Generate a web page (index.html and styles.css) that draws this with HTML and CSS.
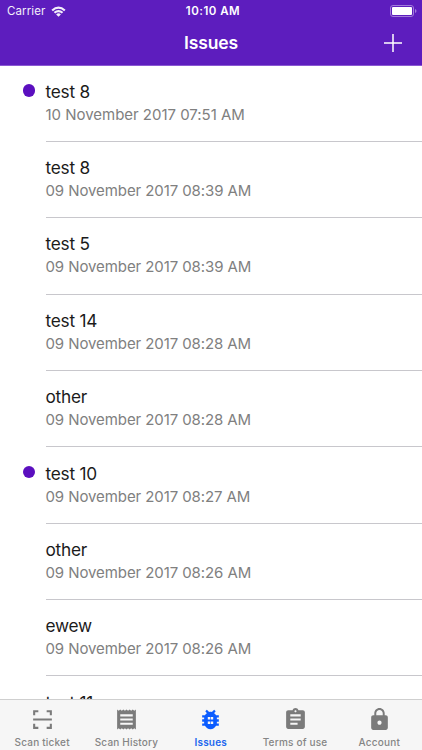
FILE: index.html
```
<!DOCTYPE html>
<html lang="en">
<head>
<meta charset="utf-8">
<title>Issues</title>
<link rel="stylesheet" href="styles.css">
</head>
<body>
<div class="app">
  <header class="header">
    <div class="status">
      <div class="carrier"><span>Carrier</span>
        <svg class="wifi" viewBox="0 0 15 11"><path d="M.4 3.700Q7.500-2.800 14.600 3.700L13.100 5.200Q7.500.3 1.900 5.200ZM2.700 6.100Q7.500 1.900 12.300 6.100L10.800 7.600Q7.500 4.800 4.200 7.600ZM5.100 8.400Q7.500 6.300 9.900 8.400L7.500 10.800Z"/></svg>
      </div>
      <div class="clock">10:10 AM</div>
      <svg class="battery" viewBox="0 0 27 12"><rect class="shell" x=".5" y=".5" width="23" height="11" rx="2.5"/><rect x="2" y="2" width="20" height="8" rx="1"/><path class="tip" d="M25 4Q26.5 4.5 26.5 6T25 8Z"/></svg>
    </div>
    <div class="navbar">
      <h1 class="title">Issues</h1>
      <svg class="plus" viewBox="0 0 18 18"><path d="M9 0V18M0 9H18"/></svg>
    </div>
  </header>
  <main class="list">
    <div class="row"><span class="dot"></span><div class="cell"><div class="name">test 8</div><div class="date narrow">10 November 2017 07:51 AM</div></div></div>
    <div class="row"><div class="cell"><div class="name">test 8</div><div class="date">09 November 2017 08:39 AM</div></div></div>
    <div class="row"><div class="cell"><div class="name">test 5</div><div class="date">09 November 2017 08:39 AM</div></div></div>
    <div class="row"><div class="cell"><div class="name">test 14</div><div class="date">09 November 2017 08:28 AM</div></div></div>
    <div class="row"><div class="cell"><div class="name">other</div><div class="date">09 November 2017 08:28 AM</div></div></div>
    <div class="row"><span class="dot"></span><div class="cell"><div class="name">test 10</div><div class="date">09 November 2017 08:27 AM</div></div></div>
    <div class="row"><div class="cell"><div class="name">other</div><div class="date">09 November 2017 08:26 AM</div></div></div>
    <div class="row"><div class="cell"><div class="name">ewew</div><div class="date">09 November 2017 08:26 AM</div></div></div>
    <div class="row"><div class="cell"><div class="name">test 11</div></div></div>
  </main>
  <nav class="tabs">
    <div class="tab"><svg viewBox="0 0 24 24"><path d="M3 3H8V5H5V8H3ZM16 3H21V8H19V5H16ZM3 16H5V19H8V21H3ZM19 16H21V21H16V19H19ZM3 11H21V13H3Z"/></svg><span>Scan ticket</span></div>
    <div class="tab"><svg viewBox="0 0 24 24"><path d="M18 17H6v-2h12v2zm0-4H6v-2h12v2zm0-4H6V7h12v2zM3 21.500l1.500-1 1.500 1 1.500-1 1.500 1 1.500-1 1.500 1 1.500-1 1.500 1 1.500-1 1.500 1 1.500-1 1.500 1V2.500l-1.500 1-1.500-1-1.500 1-1.500-1-1.500 1-1.500-1-1.500 1-1.500-1-1.500 1-1.500-1-1.500 1-1.500-1z"/></svg><span>Scan History</span></div>
    <div class="tab active"><svg viewBox="0 0 24 24"><path fill-rule="evenodd" d="M20 7.800h-2.700c-.45-.7-1.100-1.300-1.900-1.800L17 4.100 15.500 2.600l-2.200 2.100C12.900 4.600 12.500 4.600 12 4.600s-.9 0-1.300.1L8.500 2.600 7 4.100 8.600 6C7.800 6.500 7.200 7.100 6.700 7.800H4v2.300h1.900V11.800H4v2.300h1.900V15.800H4v2.300h2.700c1 1.900 3 3.300 5.300 3.300s4.300-1.400 5.300-3.300H20v-2.300h-1.900V14.100H20v-2.300h-1.900V10.100H20ZM9.400 9.500h2.300v2.500H9.400ZM12.300 9.500h2.300v2.500h-2.300ZM9.400 13.900h2.300v2.500H9.400ZM12.300 13.900h2.300v2.500h-2.300Z"/></svg><span>Issues</span></div>
    <div class="tab"><svg viewBox="0 0 24 24"><path d="M19 3h-4.180C14.400 1.840 13.300 1 12 1c-1.300 0-2.400.84-2.820 2H5c-1.100 0-2 .9-2 2v14c0 1.100.9 2 2 2h14c1.100 0 2-.9 2-2V5c0-1.100-.9-2-2-2zm-7 0c.55 0 1 .45 1 1s-.45 1-1 1-1-.45-1-1 .45-1 1-1zm2 14H7v-2h7v2zm3-4H7v-2h10v2zm0-4H7V7h10v2z"/></svg><span>Terms of use</span></div>
    <div class="tab"><svg viewBox="0 0 24 24"><path d="M18 8h-1V6c0-2.760-2.240-5-5-5S7 3.240 7 6v2H6c-1.100 0-2 .9-2 2v10c0 1.100.9 2 2 2h12c1.100 0 2-.9 2-2V10c0-1.100-.9-2-2-2zm-6 9c-1.100 0-2-.9-2-2s.9-2 2-2 2 .9 2 2-.9 2-2 2zm3.100-9H8.900V6c0-1.710 1.390-3.100 3.100-3.100 1.710 0 3.100 1.390 3.100 3.100v2z"/></svg><span>Account</span></div>
  </nav>
</div>
</body>
</html>
```
FILE: styles.css
```
* { box-sizing: border-box; }
body { margin: 0; font-family: Inter, "Liberation Sans", sans-serif; background: #fff; }
.app { width: 422px; height: 750px; display: flex; flex-direction: column; overflow: hidden; }
.header { flex: none; height: 65.5px; background: #5d1dbe; color: #fff; border-bottom: 1px solid #8a58d2; }
.status { height: 22px; display: grid; grid-template-columns: 1fr auto 1fr; align-items: center; padding: 0 5px 0 7px; }
.carrier { display: flex; align-items: center; gap: 5.5px; font-size: 11.5px; letter-spacing: .1px; opacity: .93; }
.wifi { width: 15px; height: 11px; fill: #fff; }
.clock { padding-left: 2px; font-size: 11.5px; font-weight: 600; letter-spacing: .5px; }
.battery { width: 27px; height: 12px; justify-self: end; fill: #fff; }
.shell { fill: none; stroke: #a27bdb; }
.tip { fill: #a27bdb; }
.navbar { height: 42px; display: grid; grid-template-columns: 1fr auto 1fr; align-items: center; padding: 0 20px; }
.title { grid-column: 2; margin: 0; font-size: 17.5px; line-height: 24px; font-weight: 600; letter-spacing: -.15px; }
.plus { width: 18px; height: 18px; justify-self: end; stroke: #fff; stroke-width: 1.5; fill: none; }
.list { flex: 1; min-height: 0; overflow: hidden; }
.row { height: 76.35px; padding-left: 45.5px; display: flex; position: relative; }
.dot { position: absolute; left: 22.5px; top: 18.5px; width: 12.5px; height: 12.5px; border-radius: 50%; background: #5b0fbf; }
.cell { flex: 1; border-bottom: 1px solid #c8c7cc; padding-top: 14.3px; }
.name { font-size: 17.25px; line-height: 23px; letter-spacing: -.25px; color: #1b1b1b; }
.date { padding-top: 1px; font-size: 15px; line-height: 22px; letter-spacing: -.09px; color: #808080; }
.narrow { letter-spacing: -.02px; }
.tabs { flex: none; height: 51px; display: grid; grid-template-columns: repeat(5, 84.3px); background: #f6f6f6; border-top: 1px solid #cfcfcf; color: #858585; }
.tab { display: flex; flex-direction: column; align-items: center; padding-top: 7px; }
.tab svg { width: 25px; height: 25px; fill: #7b7b7b; }
.tab span { margin-top: 4px; font-size: 10px; line-height: 13px; font-weight: 500; letter-spacing: .2px; white-space: nowrap; }
.active { color: #1b66ee; }
.tab.active svg { fill: #0b5cff; }
.tab.active span { font-weight: 600; }
```
